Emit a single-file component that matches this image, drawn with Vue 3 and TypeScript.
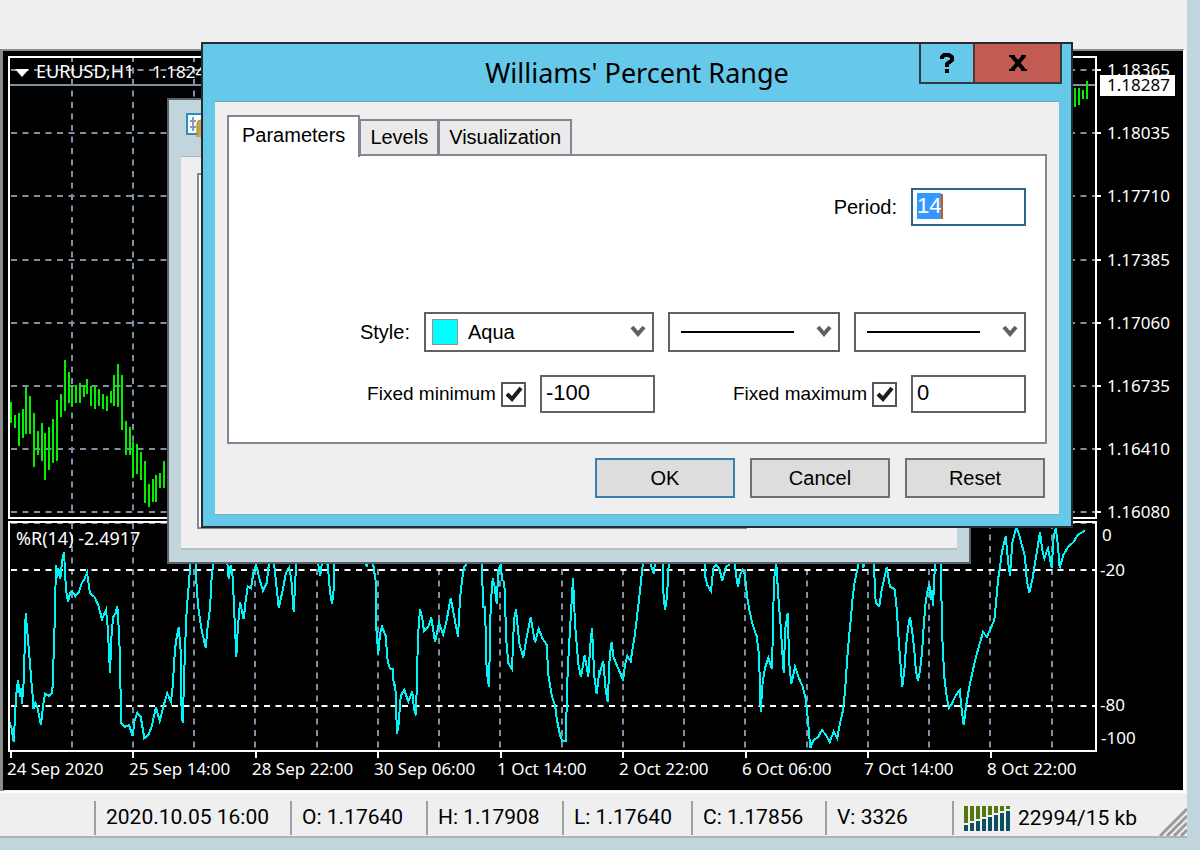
<script setup lang="ts">
import { onMounted, ref } from 'vue'

type Bar = [number, number, number]

const period = ref('14')
const fixedMin = ref(true)
const fixedMax = ref(true)
const minValue = ref('-100')
const maxValue = ref('0')
const activeTab = ref('Parameters')
const tabs = ['Parameters', 'Levels', 'Visualization']
const periodInput = ref<HTMLInputElement | null>(null)

onMounted(() => {
  periodInput.value?.focus()
  periodInput.value?.select()
})

const gridX = Array.from({ length: 17 }, (_, i) => Math.round(71.5 + i * 61.25))
const prices = ['1.18365', '1.18035', '1.17710', '1.17385', '1.17060', '1.16735', '1.16410', '1.16080']
  .map((label, i) => ({ label, y: Math.round(70 + i * 63.2) }))
const dates = [
  '24 Sep 2020', '25 Sep 14:00', '28 Sep 22:00', '30 Sep 06:00', '1 Oct 14:00',
  '2 Oct 22:00', '6 Oct 06:00', '7 Oct 14:00', '8 Oct 22:00',
].map((label, i) => ({ label, x: Math.round(10.5 + i * 122.5) }))

// Price bars and oscillator points are kept in thirds of a chart unit: x, low and high.
const leftBars: Bar[] = [
  [30, 187, 248], [42, 225, 265], [54, 220, 317], [66, 208, 293], [77, 140, 283], [88, 168, 283],
  [99, 220, 380], [111, 272, 345], [123, 250, 362], [134, 278, 421], [146, 262, 391], [157, 238, 368],
  [168, 180, 362], [180, 163, 230], [192, 60, 213], [204, 95, 190], [215, 137, 202], [226, 135, 190],
  [237, 130, 190], [249, 135, 172], [260, 118, 162], [272, 137, 197], [283, 137, 208], [295, 147, 197],
  [306, 163, 208], [318, 168, 213], [330, 152, 190], [341, 105, 197], [352, 72, 202], [364, 105, 271],
  [375, 243, 346], [387, 262, 346], [398, 307, 415], [410, 313, 403], [421, 336, 420], [433, 364, 489],
  [444, 433, 500], [456, 416, 485], [467, 405, 485], [479, 400, 443], [490, 364, 443],
]
const rightBars: Bar[] = [[524, 175, 230], [536, 175, 225], [547, 180, 208], [558, 152, 208]]
const barPath = (bars: Bar[], dx: number, dy: number) =>
  bars.map(([x, a, b]) => `M${Math.round(x / 3 + dx)} ${(a / 3 + dy).toFixed(1)}V${(b / 3 + dy).toFixed(1)}`).join('')
const priceBars = barPath(leftBars, 0.5, 340) + barPath(rightBars, 900.5, 30)

const segments: { x: number; y: number; points: string }[] = [
  { x: 0, y: 530, points: '28,575 34,590 41,636 48,500 54,450 60,500 64,475 66,522 71,455 77,250 83,318 88,375 94,450 99,510 100,538 106,518 112,530 123,585 129,530 135,491 147,497 157,490 163,320 168,105 172,145 175,115 181,148 186,95 192,65 198,180 204,216 210,190 215,183 226,199 237,185 245,160 252,150 261,128 270,190 283,200 295,225 306,268 318,240 323,290 330,430 335,305 340,260 347,250 352,228 358,320 364,580 375,590 387,585 398,618 403,575 412,548 422,560 433,625 445,615 455,590 460,568 468,532 479,573 490,530 502,490 513,516 518,470 525,357 530,322 536,290 542,365 543,505 548,580 555,357 560,240 568,145 571,105 573,60 585,60 588,140 594,225 600,270 606,305 612,330 617,355 622,300 630,235 635,140 640,100 645,60 675,60 683,108 686,148 692,105 698,140 704,275 709,380 713,300 720,215 725,240 731,268 737,210 743,170 753,175 760,130 768,105 778,145 789,182 800,160 807,100 815,60 822,100 830,175 836,235 848,180 858,128 868,112 875,160 881,247 888,110 893,60' },
  { x: 300, y: 530, points: '40,60 55,105 61,137 68,80 83,105 90,185 96,223 102,170 104,60 190,60 200,112 210,60 220,105 227,155 229,295 235,372 240,312 246,290 257,318 263,395 270,415 279,418 281,465 286,465 291,613 297,575 300,520 303,495 313,480 325,515 337,485 342,538 348,556 354,318 360,238 366,260 372,303 385,290 394,262 405,337 417,277 429,314 440,270 452,203 463,262 474,321 480,205 487,145 492,112 498,105 505,60 545,60 549,230 555,230 560,425 567,470 572,225 578,145 584,170 590,222 595,120 602,105 607,150 613,155 619,330 625,400 636,417 642,270 648,238 658,340 670,383 680,320 692,262 705,337 716,297 727,325 740,345 745,435 756,500 766,530 770,565 780,615 786,632 797,632 803,420 810,300 819,145 825,280 831,355 836,410 843,440 854,376 865,440 871,345 876,295 883,440 890,492 898,425' },
  { x: 600, y: 530, points: '0,430 6,405 10,395 17,480 23,517 29,380 35,335 40,380 50,405 62,432 69,452 75,405 82,378 92,394 97,360 104,318 110,268 121,175 127,115 135,80 145,60 153,105 161,131 170,60 187,60 190,185 195,240 201,200 206,105 210,60 312,60 316,140 322,165 333,183 340,115 348,105 358,115 367,153 378,110 386,105 400,60 409,140 414,172 420,135 428,120 435,135 440,190 447,235 458,285 470,318 477,375 482,545 488,455 495,415 505,383 516,417 522,150 529,100 535,200 542,290 551,430 556,295 563,250 568,400 574,463 585,410 597,445 608,470 617,505 622,550 631,654 640,632 655,620 666,600 678,615 689,636 701,605 712,625 718,590 728,545 735,485 741,395 747,322 753,260 758,200 764,155 775,105 785,60 790,115 800,60 817,60 822,110 827,220 838,228 845,180 860,112 870,170 884,178 890,235 896,330' },
  { x: 900, y: 500, points: '2,500 7,560 14,500 18,440 24,385 30,350 36,390 42,440 48,515 54,543 60,510 66,460 71,380 76,318 82,275 88,252 93,300 96,270 99,318 105,190 112,160 122,190 127,415 133,530 140,590 146,624 155,612 168,585 179,570 185,630 191,675 198,620 208,560 220,505 227,475 238,435 249,397 261,410 272,385 283,360 288,310 294,240 300,200 306,155 317,108 325,190 330,227 337,130 345,95 350,85 356,100 368,145 375,170 380,240 388,278 397,240 405,190 420,97 427,150 433,175 444,145 455,203 461,110 467,85 473,130 479,205 490,165 505,140 520,127 533,105 555,92' },
]
const oscillator = segments
  .map((s) => s.points.split(' ').map((p) => {
    const [x, y] = p.split(',').map(Number)
    return `${(x / 3 + s.x).toFixed(1)},${(y / 3 + s.y).toFixed(1)}`
  }).join(' '))
  .join(' ')

const quote = ['2020.10.05 16:00', 'O: 1.17640', 'H: 1.17908', 'L: 1.17640', 'C: 1.17856', 'V: 3326']
const signal = Array.from({ length: 8 }, (_, i) => ({ x: i * 6, split: 19 - i * 2 }))
</script>

<template>
  <div class="desktop">
    <main class="terminal">
      <div class="toolbar"></div>
      <svg class="chart" viewBox="0 49 1187 742" role="img" aria-label="EURUSD,H1">
        <rect x="0" y="49" width="1187" height="742" fill="#efefef" />
        <rect x="0" y="49" width="1184" height="3" fill="#8c8c8c" />
        <rect x="0" y="50" width="4" height="741" fill="#8c8c8c" />
        <rect x="3" y="51" width="1180" height="739" fill="#000" />
        <rect x="1183" y="50" width="3" height="741" fill="#fff" />

        <g stroke="#8090a2" stroke-width="2" fill="none">
          <path v-for="x in gridX" :key="x" :d="`M${x} 56V516M${x} 523V750`" stroke-dasharray="6 5.5" />
          <path v-for="p in prices" :key="p.y" :d="`M11 ${p.y}H1095`" stroke-dasharray="6 5.5" />
          <path d="M11 523H1095" stroke-dasharray="6 5.5" />
          <path d="M10 85H1096" />
        </g>
        <g stroke="#fff" stroke-width="2" stroke-dasharray="6 5.5">
          <path d="M11 570H1095" />
          <path d="M11 706H1095" />
        </g>

        <g fill="none" stroke-width="2" shape-rendering="crispEdges">
          <path :d="priceBars" stroke="#00f000" />
          <polyline :points="oscillator" stroke="#00f5f8" />
        </g>

        <g stroke="#fff" stroke-width="2" fill="none">
          <path d="M9 518V57H1096V518Z" />
          <path d="M9 751V522H1096V751Z" />
          <path v-for="p in prices" :key="p.label" :d="`M1096 ${p.y}H1101`" />
          <path v-for="d in dates" :key="d.label" :d="`M${d.x} 751V758`" />
        </g>

        <g fill="#fff" class="axis-text">
          <text v-for="p in prices" :key="p.label" x="1107" :y="p.y + 6">{{ p.label }}</text>
          <text x="1102" y="541">0</text>
          <text x="1100" y="576">-20</text>
          <text x="1100" y="711">-80</text>
          <text x="1101" y="744">-100</text>
          <text v-for="d in dates" :key="d.label" :x="d.x - 4" y="775">{{ d.label }}</text>
          <text x="36" y="78" class="caption">EURUSD,H1</text>
          <text x="152" y="78">1.1824</text>
          <text x="16" y="545" class="caption">%R(14) -2.4917</text>
        </g>
        <path d="M15 69H29L22 77Z" fill="#fff" />
        <rect x="1100" y="75" width="75" height="21" fill="#fff" />
        <text x="1107" y="91" fill="#000" class="axis-text">1.18287</text>
      </svg>

      <footer class="status">
        <span></span>
        <span v-for="q in quote" :key="q" class="cell">{{ q }}</span>
        <span class="cell traffic">
          <svg width="46" height="25" viewBox="0 0 46 25" aria-hidden="true">
            <template v-for="s in signal" :key="s.x">
              <rect :x="s.x" y="0" width="4" :height="s.split - 2" fill="#55780e" />
              <rect :x="s.x" :y="s.split" width="4" :height="25 - s.split" fill="#0b4f60" />
            </template>
          </svg>
          22994/15 kb
        </span>
        <svg class="grip" width="28" height="28" viewBox="0 0 28 28" aria-hidden="true">
          <path d="M1 28L28 1M8 28L28 8M15 28L28 15M22 28L28 22" stroke="#9a9a9a" stroke-width="3" />
        </svg>
      </footer>
    </main>

    <section class="back-window">
      <svg class="back-icon" width="22" height="24" viewBox="0 0 22 24" aria-hidden="true">
        <rect x="1" y="1" width="24" height="20" fill="#f4fbff" stroke="#2b8cbe" stroke-width="2" />
        <path d="M4 8H10M4 14H10M7 4V18" stroke="#8a9bab" stroke-width="2" />
        <rect x="11" y="7" width="14" height="19" rx="4" fill="#c9a548" stroke="#b87b2c" />
      </svg>
      <div class="back-body"><div class="back-panel"></div></div>
    </section>

    <section class="dialog" role="dialog" aria-labelledby="dialog-title">
      <header class="titlebar">
        <h1 id="dialog-title">Williams' Percent Range</h1>
        <div class="window-buttons">
          <button class="help" type="button" aria-label="Help">
            <svg width="14" height="20" viewBox="0 0 14 20" aria-hidden="true">
              <path d="M2 6V4L4 2H9L12 4V7L7 11V14" fill="none" stroke="#000" stroke-width="4" />
              <rect x="5" y="16" width="4" height="4" />
            </svg>
          </button>
          <button class="close" type="button" aria-label="Close">
            <svg width="18" height="16" viewBox="0 0 18 16" aria-hidden="true">
              <path d="M3 1L15 15M15 1L3 15" stroke="#000" stroke-width="4" />
              <path d="M0 1H6M12 1H17M0 15H6M12 15H18" stroke="#000" stroke-width="2" />
            </svg>
          </button>
        </div>
      </header>

      <form class="content" @submit.prevent>
        <div class="tabs" role="tablist">
          <button v-for="t in tabs" :key="t" type="button" role="tab" class="tab"
            :class="{ active: t === activeTab }" :aria-selected="t === activeTab" @click="activeTab = t">{{ t }}</button>
        </div>
        <div class="panel" role="tabpanel">
          <div class="row period-row">
            <label for="period">Period:</label>
            <span class="field">
              <input id="period" ref="periodInput" v-model="period" class="text-box" type="text" />
              <i class="caret"></i>
            </span>
          </div>
          <div class="row style-row">
            <label for="color">Style:</label>
            <span class="combo color-combo">
              <select id="color"><option>Aqua</option></select>
              <i class="swatch"></i>
              <svg class="chevron" width="16" height="14" viewBox="0 0 16 14"><path d="M2 2L8 9L14 2" /></svg>
            </span>
            <span v-for="name in ['Line style', 'Line width']" :key="name" class="combo line-combo">
              <select :aria-label="name"><option></option></select>
              <i class="line"></i>
              <svg class="chevron" width="16" height="14" viewBox="0 0 16 14"><path d="M2 2L8 9L14 2" /></svg>
            </span>
          </div>
          <div class="row limits-row">
            <label class="check">Fixed minimum
              <input v-model="fixedMin" type="checkbox" />
              <svg v-if="fixedMin" class="tick" width="18" height="17" viewBox="0 0 18 17"><path d="M2 8L7 13L16 2" /></svg>
            </label>
            <input v-model="minValue" class="text-box" type="text" aria-label="Fixed minimum" />
            <label class="check second">Fixed maximum
              <input v-model="fixedMax" type="checkbox" />
              <svg v-if="fixedMax" class="tick" width="18" height="17" viewBox="0 0 18 17"><path d="M2 8L7 13L16 2" /></svg>
            </label>
            <input v-model="maxValue" class="text-box" type="text" aria-label="Fixed maximum" />
          </div>
        </div>
        <div class="actions">
          <button class="default" type="submit">OK</button>
          <button type="button">Cancel</button>
          <button type="button">Reset</button>
        </div>
      </form>
    </section>
  </div>
</template>

<style>
html {
  background: #c2d5dc;
}
</style>

<style scoped>
.desktop {
  position: relative;
  box-sizing: border-box;
  padding: 0 13px 12px 0;
  overflow: hidden;
  background: #c2d5dc;
  font-family: Roboto, "Liberation Sans", sans-serif;
  font-size: 21px;
  color: #000;
}
.desktop * {
  box-sizing: border-box;
}
.terminal {
  background: #efefef;
}
.toolbar {
  height: 49px;
}
.chart {
  display: block;
  width: 100%;
  height: auto;
}
.axis-text {
  font-family: "Noto Sans", sans-serif;
  font-size: 17px;
}
.caption {
  font-size: 18px;
}
.status {
  position: relative;
  display: grid;
  grid-template-columns: 94fr 196fr 136fr 136fr 129fr 134fr 127fr 235fr;
  height: 47px;
  padding-top: 8px;
  border-top: 2px solid #fff;
  border-bottom: 2px solid #abb5b9;
}
.cell {
  min-width: 0;
  height: 34px;
  padding-left: 10px;
  border-left: 2px solid #a0a0a0;
  line-height: 33px;
  white-space: nowrap;
}
.traffic {
  display: flex;
  align-items: center;
  gap: 8px;
}
.grip {
  position: absolute;
  right: 0;
  bottom: 0;
}
.back-window {
  position: absolute;
  top: 98px;
  left: 167px;
  right: 229px;
  height: 466px;
  padding: 56px 12px 12px;
  border: 2px solid #59616b;
  background: #c2d5dc;
}
.back-icon {
  position: absolute;
  top: 13px;
  left: 17px;
}
.back-body {
  height: 100%;
  padding: 16px 15px 19px 16px;
  border-top: 1px solid #a9b7bd;
  border-bottom: 2px solid #b3bfc4;
  background: #efefef;
}
.back-panel {
  width: 550px;
  height: 100%;
  border: 2px solid #838794;
  background: #fff;
}
.dialog {
  position: absolute;
  top: 42px;
  left: 201px;
  right: 127px;
  padding: 0 12px 11px;
  border: 2px solid #242c30;
  background: #66c9ea;
  font-family: "Liberation Sans", Roboto, sans-serif;
  font-size: 20px;
}
.titlebar {
  position: relative;
  display: flex;
  align-items: center;
  justify-content: center;
  height: 57px;
}
.titlebar h1 {
  margin: 0;
  font-family: "Noto Sans", sans-serif;
  font-size: 27px;
  font-weight: 400;
  line-height: 36px;
}
.window-buttons {
  position: absolute;
  top: 0;
  right: -3px;
  display: flex;
  height: 40px;
  border: 2px solid #343b40;
  border-top: 0;
}
.window-buttons button {
  display: flex;
  align-items: center;
  justify-content: center;
  padding: 0;
  border: 0;
  background: #66c9ea;
}
.window-buttons .help {
  width: 52px;
}
.window-buttons .close {
  width: 87px;
  border-left: 2px solid #593236;
  background: #c25b51;
}
.content {
  padding: 13px 12px 16px;
  border-top: 1px solid #6ba3c2;
  border-bottom: 1px solid #88a5b3;
  background: #efefef;
}
.tabs {
  position: relative;
  z-index: 1;
  display: flex;
  align-items: flex-end;
  height: 39px;
}
.tab {
  height: 35px;
  margin-left: -1px;
  padding: 0 9px;
  border: 2px solid #838794;
  border-bottom: 0;
  background: #eaeaea;
  font: inherit;
  line-height: 33px;
}
.tab.active {
  align-self: flex-start;
  height: 42px;
  margin-left: 0;
  padding: 0 13px 4px;
  background: #fff;
}
.panel {
  padding: 32px 19px 29px;
  border: 2px solid #838794;
  background: #fff;
}
.row {
  display: flex;
  align-items: center;
  justify-content: flex-end;
  gap: 14px;
}
.style-row {
  margin-top: 86px;
}
.limits-row {
  margin-top: 23px;
}
.field,
.combo,
.check {
  position: relative;
  display: flex;
  align-items: center;
}
.text-box {
  width: 115px;
  height: 38px;
  padding: 0 4px 2px;
  border: 2px solid #626262;
  border-radius: 0;
  outline: 0;
  background: #fff;
  font: inherit;
  font-size: 22px;
}
.text-box:focus {
  border-color: #2d6688;
}
.text-box::selection {
  background: #3399ff;
  color: #fff;
}
.caret {
  position: absolute;
  top: 6px;
  left: 30px;
  width: 2px;
  height: 25px;
  background: #d3590d;
}
.combo {
  height: 40px;
}
.color-combo {
  width: 230px;
}
.line-combo {
  width: 172px;
}
.combo select {
  width: 100%;
  height: 100%;
  padding: 0 30px 0 42px;
  border: 2px solid #626262;
  border-radius: 0;
  appearance: none;
  background: #fff;
  color: #000;
  font: inherit;
}
.swatch {
  position: absolute;
  left: 8px;
  width: 26px;
  height: 26px;
  border: 1px solid #a58b86;
  background: #00ffff;
  pointer-events: none;
}
.line {
  position: absolute;
  left: 13px;
  right: 46px;
  height: 2px;
  background: #000;
  pointer-events: none;
}
.chevron {
  position: absolute;
  right: 8px;
  fill: none;
  stroke: #606060;
  stroke-width: 4;
  pointer-events: none;
}
.check {
  gap: 5px;
  font-size: 19px;
}
.check.second {
  margin-left: 64px;
}
.check input {
  width: 25px;
  height: 25px;
  margin: 0;
  border: 2px solid #565656;
  appearance: none;
  background: #fff;
}
.tick {
  position: absolute;
  right: 3px;
  fill: none;
  stroke: #1c1c1c;
  stroke-width: 4;
  pointer-events: none;
}
.actions {
  display: flex;
  justify-content: flex-end;
  gap: 15px;
  margin: 14px 2px 0 0;
}
.actions button {
  width: 140px;
  height: 40px;
  padding: 0;
  border: 2px solid #707070;
  background: #dddddd;
  font: inherit;
}
.actions .default {
  border-color: #3c7fb1;
}
</style>
